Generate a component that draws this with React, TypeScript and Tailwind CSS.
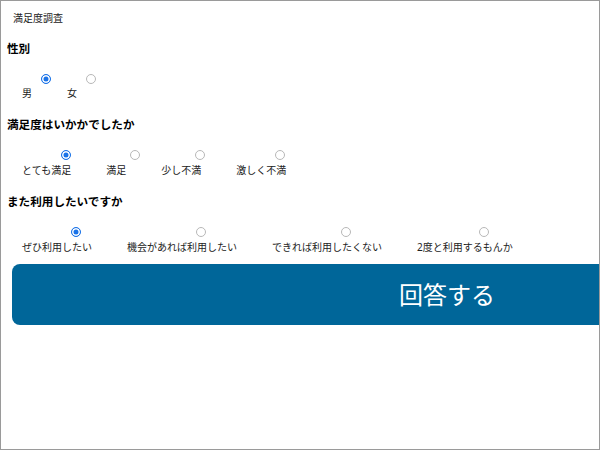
import React from 'react';

type Question = {
  name: string;
  title: string;
  options: string[];
  first?: boolean;
};

const questions: Question[] = [
  { name: 'gender', title: '性別', options: ['男', '女'], first: true },
  {
    name: 'satisfaction',
    title: '満足度はいかかでしたか',
    options: ['とても満足', '満足', '少し不満', '激しく不満'],
  },
  {
    name: 'again',
    title: 'また利用したいですか',
    options: [
      'ぜひ利用したい',
      '機会があれば利用したい',
      'できれば利用したくない',
      '2度と利用するもんか',
    ],
  },
];

function RadioGroup({ q }: { q: Question }) {
  return (
    <div className={q.first ? 'mt-[16px]' : 'mt-[17px]'}>
      <h3 className="pl-[6px] text-[11.6px] leading-[16px] font-bold text-black">
        {q.title}
      </h3>
      <div className="mt-[17px] flex gap-[35px] pl-[21px]">
        {q.options.map((opt, i) => (
          <label
            key={opt}
            className={
              'flex flex-col items-center ' +
              (q.first ? 'gap-[2px]' : 'gap-[3px]')
            }
          >
            <input
              type="radio"
              name={q.name}
              defaultChecked={i === 0}
              className="m-0 h-[10px] w-[10px] translate-x-[19px] appearance-none rounded-full border border-[#b8b8b8] bg-white checked:border-[#1a73e8] checked:bg-[#1a73e8] checked:shadow-[inset_0_0_0_1.5px_white]"
            />
            <span className="text-[10px] leading-[14px] whitespace-nowrap text-[#222]">
              {opt}
            </span>
          </label>
        ))}
      </div>
    </div>
  );
}

export default function App() {
  return (
    <div
      className="h-[450px] w-[600px] overflow-hidden border border-[#9a9a9a] bg-white"
      style={{ fontFamily: '"Noto Sans", "Noto Sans CJK JP", sans-serif' }}
    >
      <p className="pt-[10px] pl-[12px] text-[10px] leading-[14px] text-[#222]">
        満足度調査
      </p>
      {questions.map((q) => (
        <RadioGroup key={q.name} q={q} />
      ))}
      <button
        type="button"
        className="mt-[10px] ml-[11px] flex h-[61px] w-[870px] shrink-0 items-center justify-center rounded-[8px] bg-[#006699] text-[24px] text-white"
      >
        回答する
      </button>
    </div>
  );
}
